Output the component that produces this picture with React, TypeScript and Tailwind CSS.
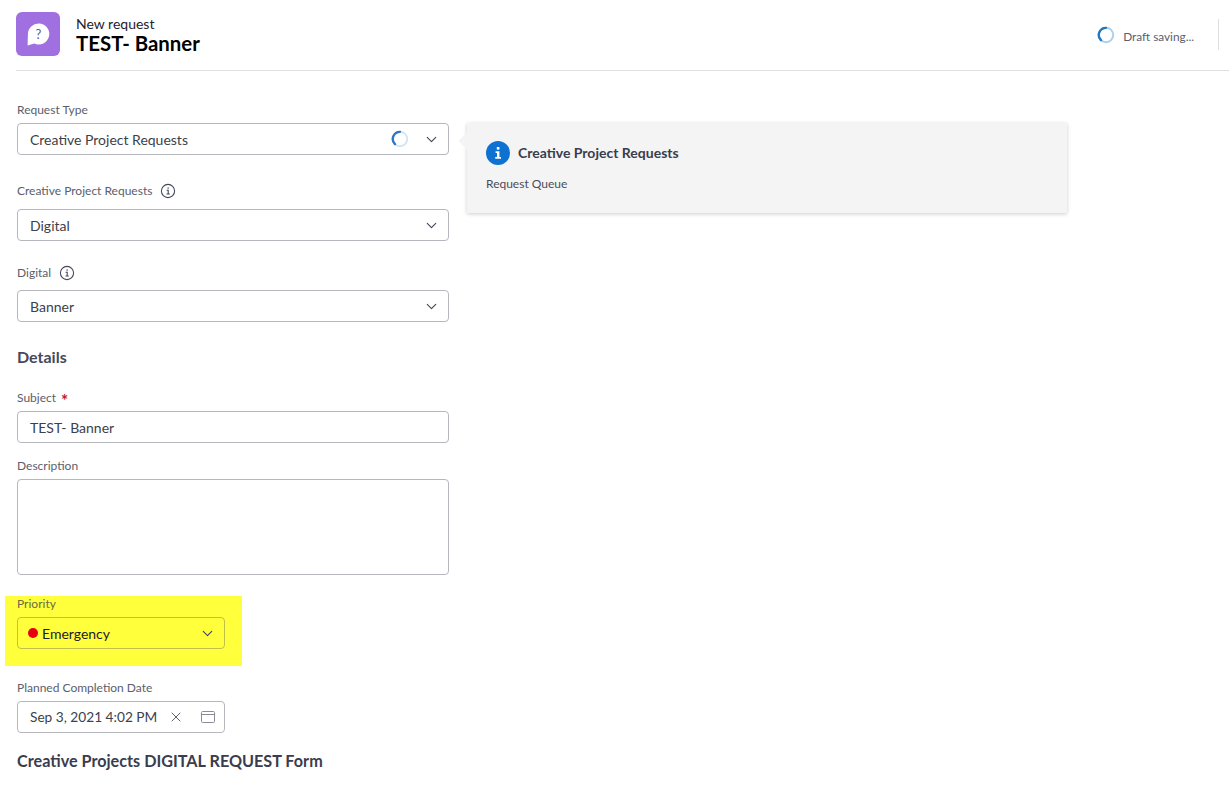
import React from 'react';
import { ChevronDown, X } from 'lucide-react';

function Spinner({ size, track, head }: { size: number; track: string; head: string }) {
  return (
    <svg width={size} height={size} viewBox="0 0 20 20" fill="none">
      <circle cx="10" cy="10" r="8" stroke={track} strokeWidth="2.2" />
      <path d="M10 2a8 8 0 0 0-5.6 13.7" stroke={head} strokeWidth="2.6" strokeLinecap="round" />
    </svg>
  );
}

function InfoIcon() {
  return (
    <svg width="16" height="16" viewBox="0 0 16 16" fill="none" className="text-[#45485a]">
      <circle cx="8" cy="8" r="6.6" stroke="currentColor" strokeWidth="1.1" />
      <path d="M6.6 7.2H8.2V11M6.5 11H9.8" stroke="currentColor" strokeWidth="1.1" />
      <rect x="7.5" y="4.4" width="1.3" height="1.3" fill="currentColor" />
    </svg>
  );
}

function Label({ children, className = '' }: { children: React.ReactNode; className?: string }) {
  return <div className={`text-xs leading-[14px] text-[#5b5e6b] ${className}`}>{children}</div>;
}

function Chevron() {
  return <ChevronDown size={17} strokeWidth={1.5} className="text-[#3f4254]" />;
}

function Select({ value, extra }: { value: string; extra?: React.ReactNode }) {
  return (
    <div className="flex h-8 w-[432px] items-center rounded border border-[#b5b7bd] bg-white pl-3 pr-[8px]">
      <span className="flex-1 pt-px text-sm text-[#3c3f4c]">{value}</span>
      {extra}
      <Chevron />
    </div>
  );
}

export default function App() {
  return (
    <div className="h-[786px] w-[1229px] overflow-hidden bg-white font-['Lato',sans-serif]">
      {/* header */}
      <header className="ml-4 flex h-[71px] items-start border-b border-[#dfdfe1] pt-3">
        <div className="flex h-11 w-11 items-center justify-center rounded-md bg-[#a06fe0]">
          <svg width="24" height="24" viewBox="0 0 24 24">
            <path d="M12.8 1.4a10.6 10.6 0 1 1-4.6 20.2L1.6 23.6 1.9 12A10.7 10.7 0 0 1 12.8 1.4z" fill="#fff" />
            <text x="12.4" y="16.6" textAnchor="middle" fontSize="13" fill="#5d5f80" fontFamily="Lato, sans-serif">?</text>
          </svg>
        </div>
        <div className="ml-4 flex-1">
          <div className="mt-1 text-sm leading-[15px] text-[#1f2230]">New request</div>
          <div className="mt-px text-[20.4px] font-bold leading-[22px] text-black">TEST- Banner</div>
        </div>
        <div className="mt-[7px] flex h-[31px] items-center border-r border-[#dfdfe1] pr-6">
          <Spinner size={18} track="#a9d0ee" head="#1f78c1" />
          <span className="ml-2 mt-[5px] text-[11.8px] text-[#5b5e6b]">Draft saving...</span>
        </div>
        <div className="w-[10px]" />
      </header>

      <main className="flex items-start pl-[17px]">
        {/* form column */}
        <div className="w-[432px] shrink-0">
          <Label className="mt-[32px]">Request Type</Label>
          <div className="mt-[6px]">
            <Select value="Creative Project Requests" extra={<span className="mr-[14px] flex"><Spinner size={18} track="#d5e4f2" head="#2b78c4" /></span>} />
          </div>

          <Label className="mt-[28px] flex items-center">
            Creative Project Requests <span className="ml-2 inline-flex"><InfoIcon /></span>
          </Label>
          <div className="mt-[10px]"><Select value="Digital" /></div>

          <Label className="mt-[24px] flex items-center">
            Digital <span className="ml-2 inline-flex"><InfoIcon /></span>
          </Label>
          <div className="mt-[9px]"><Select value="Banner" /></div>

          <h2 className="mt-[26px] text-base font-bold leading-[18px] text-[#45485a]">Details</h2>

          <Label className="mt-[25px] flex h-[14px]">
            Subject
            <span className="relative top-[3px] ml-[5px] text-[17px] leading-[14px] font-bold text-[#c4162a]">*</span>
          </Label>
          <div className="mt-[6px] flex h-8 w-[432px] items-center rounded border border-[#b5b7bd] pl-3 pt-px text-sm text-[#3c3f4c]">
            TEST- Banner
          </div>

          <Label className="mt-4">Description</Label>
          <div className="mt-[6px] h-24 w-[432px] rounded border border-[#b5b7bd]" />

          {/* highlighted priority */}
          <div className="ml-[-12px] mt-[21px] h-[70px] w-[237px] bg-[#ffff3c] pl-3">
            <Label className="pt-px text-[#6b6c45]">Priority</Label>
            <div className="mt-[6px] flex h-8 w-52 items-center rounded border border-[#c0c04a] pl-[10px] pr-[8px]">
              <span className="h-[10px] w-[10px] rounded-full bg-[#e60012]" />
              <span className="ml-1 flex-1 pt-px text-sm text-[#1e2030]">Emergency</span>
              <Chevron />
            </div>
          </div>

          <Label className="mt-[15px]">Planned Completion Date</Label>
          <div className="mt-[6px] flex h-8 w-52 items-center rounded border border-[#b5b7bd] pl-3 pr-[8px]">
            <span className="flex-1 pt-px text-[13.7px] text-[#3c3f4c]">Sep 3, 2021 4:02 PM</span>
            <X size={16} strokeWidth={1.3} className="mr-[16px] text-[#45485a]" />
            <svg width="16" height="14" viewBox="0 0 16 14" fill="none" stroke="#8a8c98" strokeWidth="1">
              <rect x="1.5" y="1.5" width="13" height="11" rx="1" />
              <path d="M1.5 4.5h13" />
            </svg>
          </div>

          <h2 className="mt-[19px] whitespace-nowrap text-[16.2px] font-bold leading-[18px] text-[#3a3d4d]">Creative Projects DIGITAL REQUEST Form</h2>
        </div>

        {/* side card */}
        <div className="relative ml-[18px] mt-[52px] h-[90px] w-[600px] bg-[#f4f4f4] px-[19px] pt-[18px] shadow-[0_1px_4px_rgba(0,0,0,0.2)]">
          <div className="absolute left-[-6px] top-[12px] h-3 w-3 rotate-45 bg-[#f4f4f4]" />
          <div className="flex items-center">
            <div className="flex h-6 w-6 items-center justify-center rounded-full bg-[#0f72d1]">
              <svg width="12" height="14" viewBox="0 0 12 14" fill="#fff">
                <rect x="4.8" y="1" width="2.6" height="2.6" />
                <path d="M3.6 5.2H7.4V11H9V12.8H3.2V11H5V7H3.6z" />
              </svg>
            </div>
            <span className="ml-2 text-sm font-bold text-[#3a3d4d]">Creative Project Requests</span>
          </div>
          <div className="mt-3 text-xs leading-[14px] text-[#4a4d5b]">Request Queue</div>
        </div>
      </main>
    </div>
  );
}
